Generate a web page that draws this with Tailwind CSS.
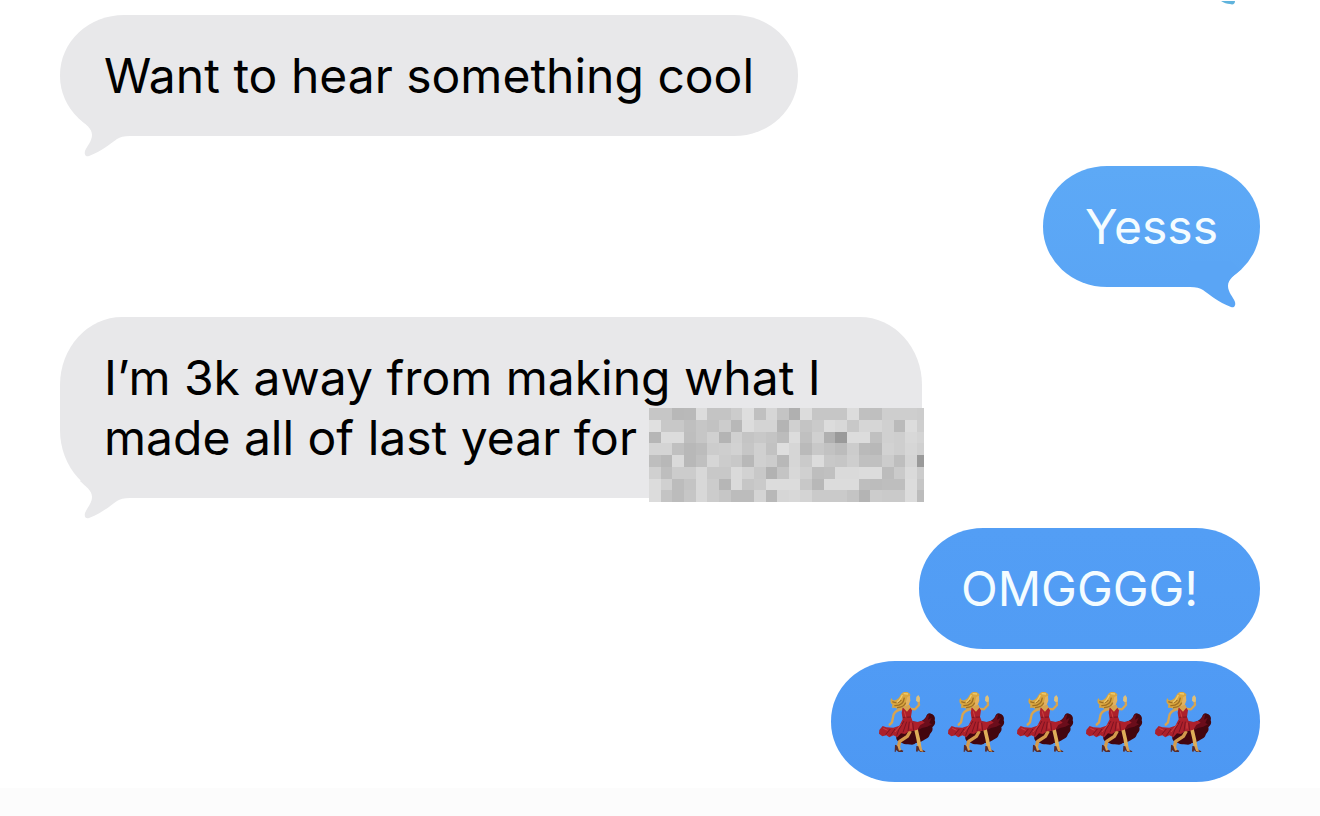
<!DOCTYPE html>
<html lang="en">
<head>
    <meta charset="UTF-8">
    <meta name="viewport" content="width=device-width, initial-scale=1.0">
    <title>Messages</title>
    <script src="https://cdn.jsdelivr.net/npm/@tailwindcss/browser@4"></script>
</head>
<body class="min-h-screen flex flex-col bg-white font-['Inter','Liberation_Sans',sans-serif] text-5xl leading-[60px]">

    <!-- Shared shapes -->
    <svg class="hidden">
        <symbol id="tail" viewBox="0 0 70 54">
            <path d="M30 4L20 13C25 18 32 22 32 29C32 35 27 40 25 45C24 49 26 51 29 50C42 45 50 38 57 33C60 31 64 30 70 30V4Z"/>
        </symbol>
        <symbol id="dancer" viewBox="9 33 207 180">
            <!-- back of the skirt -->
            <path fill="#43060f" d="M128 121C145 126 158 122 168 108C170 98 178 93 185 99C192 101 197 110 194 118C198 126 193 134 187 139C190 150 183 155 179 161C176 172 167 172 161 178C151 185 144 185 136 187C128 195 119 188 110 190C100 191 96 184 88 183C82 181 77 175 79 165L98 146Z"/>
            <path fill="#6b0d1b" d="M133 125C151 130 164 117 171 104L178 99L174 116L185 110L178 126L186 130L172 137L156 141L139 150Z"/>
            <!-- legs -->
            <path fill="none" stroke="#d39a4c" stroke-width="10" stroke-linejoin="round" d="M121 150L112 166L89 181L84 203"/>
            <path fill="none" stroke="#dfad58" stroke-width="11" stroke-linejoin="round" d="M138 145L145 176L150 206"/>
            <path fill="#572c2e" d="M75 191L83 194L90 205L100 209L98 214L86 213L78 207L77 213L74 212ZM139 195L147 196L154 205L166 211L164 217L153 214L144 208L142 213L138 211Z"/>
            <path fill="#d9a253" d="M81 191L88 193L94 207L87 209ZM144 193L151 195L160 212L150 210Z"/>
            <!-- arms -->
            <path fill="none" stroke="#d8a450" stroke-width="7" stroke-linecap="round" stroke-linejoin="round" d="M98 84C85 85 76 91 71 100L66 124L59 131"/>
            <path fill="none" stroke="#d8a450" stroke-width="7" stroke-linecap="round" stroke-linejoin="round" d="M119 83L135 85L147 72L145 50"/>
            <path fill="#dfc07a" d="M139 48L145 42L150 50L149 62L143 63L138 59Z"/>
            <path fill="#d8a450" d="M100 73L119 72L124 88L113 98L98 87Z"/>
            <!-- dress -->
            <path fill="#ad202b" d="M98 79L111 92L121 80L126 88L123 107L128 121L144 123L157 119L164 125L151 132L142 146L128 150L116 151L105 159L93 157L82 169L70 163L58 169L49 163L37 166L27 158L28 147L38 135L49 139L70 140L88 134L98 115L95 95Z"/>
            <path fill="none" stroke="#7c1321" stroke-width="3" d="M102 120L86 147L80 164M110 122L99 154M118 122L114 150M128 125L131 148M61 144L47 160M75 144L61 164M99 109L123 108"/>
            <path fill="none" stroke="#cf4040" stroke-width="3" d="M103 91L108 110M94 129L75 153M123 125L123 143M40 142L53 148"/>
            <!-- head and hair -->
            <path fill="#e3b260" d="M106 43L120 44L121 59L116 72L105 75Z"/>
            <path fill="#d9a640" d="M122 43C117 30 101 29 93 40C88 48 86 55 75 58C69 58 64 55 64 50C58 61 63 68 67 70L66 81C74 79 76 82 84 83C99 82 107 75 108 62L112 48Z"/>
            <path fill="none" stroke="#a07024" stroke-width="4" d="M103 50C101 67 89 75 73 74M67 62C77 67 87 65 94 57M81 80C95 79 104 75 107 65"/>
            <path fill="none" stroke="#efcb6c" stroke-width="4" d="M97 42C92 51 91 60 80 65M101 38L114 39"/>
        </symbol>
    </svg>

    <!-- Tip of the message above -->
    <svg class="absolute top-0 right-[84px] w-4 h-1.5" viewBox="0 0 16 6" aria-hidden="true">
        <path fill="#5fb3dc" d="M1 1H15C15 4 13 5 10 4C7 4 4 3 1 1Z"/>
    </svg>

    <main class="flex flex-col px-[60px] pt-[15px] pb-1.5">
        <div class="relative self-start px-11 pt-[31px] pb-[30px] rounded-[64px/60px] bg-[#e8e8ea] text-black">
            <p>Want to hear something cool</p>
            <svg class="absolute left-0 -bottom-6 w-[70px] h-[54px] fill-[#e8e8ea]" aria-hidden="true"><use href="#tail"/></svg>
        </div>

        <div class="relative self-end mt-[30px] px-[42px] pt-[31px] pb-[30px] rounded-[64px/60px] bg-linear-to-b from-[#5da9f6] to-[#5aa5f5] text-[#f4fcff]">
            <p>Yesss</p>
            <svg class="absolute right-0 -bottom-6 w-[70px] h-[54px] -scale-x-100 fill-[#5aa5f5]" aria-hidden="true"><use href="#tail"/></svg>
        </div>

        <div class="relative self-start mt-[30px] w-full max-w-[862px] px-11 pt-[31px] pb-[30px] rounded-[62px/68px] bg-[#e8e8ea] text-black">
            <p>I’m 3k away from making what I made all of last year for</p>
            <svg class="absolute left-0 -bottom-6 w-[70px] h-[54px] fill-[#e8e8ea]" aria-hidden="true"><use href="#tail"/></svg>
            <svg id="mosaic" class="absolute -right-0.5 -bottom-1 w-[275px] h-[94px]" viewBox="0 0 23.6 8" preserveAspectRatio="none" shape-rendering="crispEdges" role="img" aria-label="Hidden text"></svg>
        </div>

        <div class="self-end mt-[30px] min-w-[341px] px-[42px] pt-[31px] pb-[30px] rounded-[64px/60px] bg-linear-to-b from-[#539ef5] to-[#519cf4] text-[#f4fcff]">
            <p>OMGGGG!</p>
        </div>

        <div class="self-end mt-3 px-[42px] pt-[31px] pb-[30px] rounded-[64px/60px] bg-linear-to-b from-[#509bf5] to-[#4d98f3]">
            <div class="flex" role="img" aria-label="Five dancing women">
                <svg class="w-[69px] h-[60px] overflow-visible"><use href="#dancer"/></svg>
                <svg class="w-[69px] h-[60px] overflow-visible"><use href="#dancer"/></svg>
                <svg class="w-[69px] h-[60px] overflow-visible"><use href="#dancer"/></svg>
                <svg class="w-[69px] h-[60px] overflow-visible"><use href="#dancer"/></svg>
                <svg class="w-[69px] h-[60px] overflow-visible"><use href="#dancer"/></svg>
            </div>
        </div>
    </main>

    <div class="grow bg-[#fcfcfc]"></div>

    <script>
        // Grey level of every mosaic cell, row by row
        const rows = [
            'c6 c6 b8 b9 dc c4 c4 cc de c0 d6 c4 b0 dc c6 c6 c6 dc c0 bf ce ce ce cc',
            'e0 c8 c8 bf c6 c2 cc b8 dc d4 d4 b4 d0 c4 ca dc d8 c8 d6 d6 d0 ba dc ce',
            'b6 dc dc be c6 d0 b4 d0 c4 c8 c4 bc dc c0 d0 b0 9a dc dc c0 d0 ce d8 d4',
            'd4 d4 c0 b8 bc cc ce d2 c6 d0 c2 de d6 ba c8 c2 bc cc ba b8 d2 ce d6 d0',
            'be b8 da b8 c0 d6 cc c8 b8 d0 cc b8 d6 ca dc c8 c6 ce c0 c0 cc be d4 9a',
            'd0 be cc cc d8 c8 c8 da d2 c8 b2 c4 d8 d0 be c0 da da dc dc bc ca da cc',
            'dc d0 bc c4 d8 cc b6 da c6 ca dc dc dc c8 b8 dc dc dc be bc be be dc c6',
            'dc c4 bc c6 d8 cc c6 bc bc d4 b8 d6 d8 d4 ca ca ca c4 b4 cc ca ca dc bc'
        ];
        const mosaic = document.getElementById('mosaic');
        mosaic.innerHTML = rows.map((row, y) =>
            row.split(' ').map((g, x) => `<rect x="${x}" y="${y}" width="1" height="1" fill="#${g}${g}${g}"/>`).join('')
        ).join('');
    </script>
</body>
</html>
